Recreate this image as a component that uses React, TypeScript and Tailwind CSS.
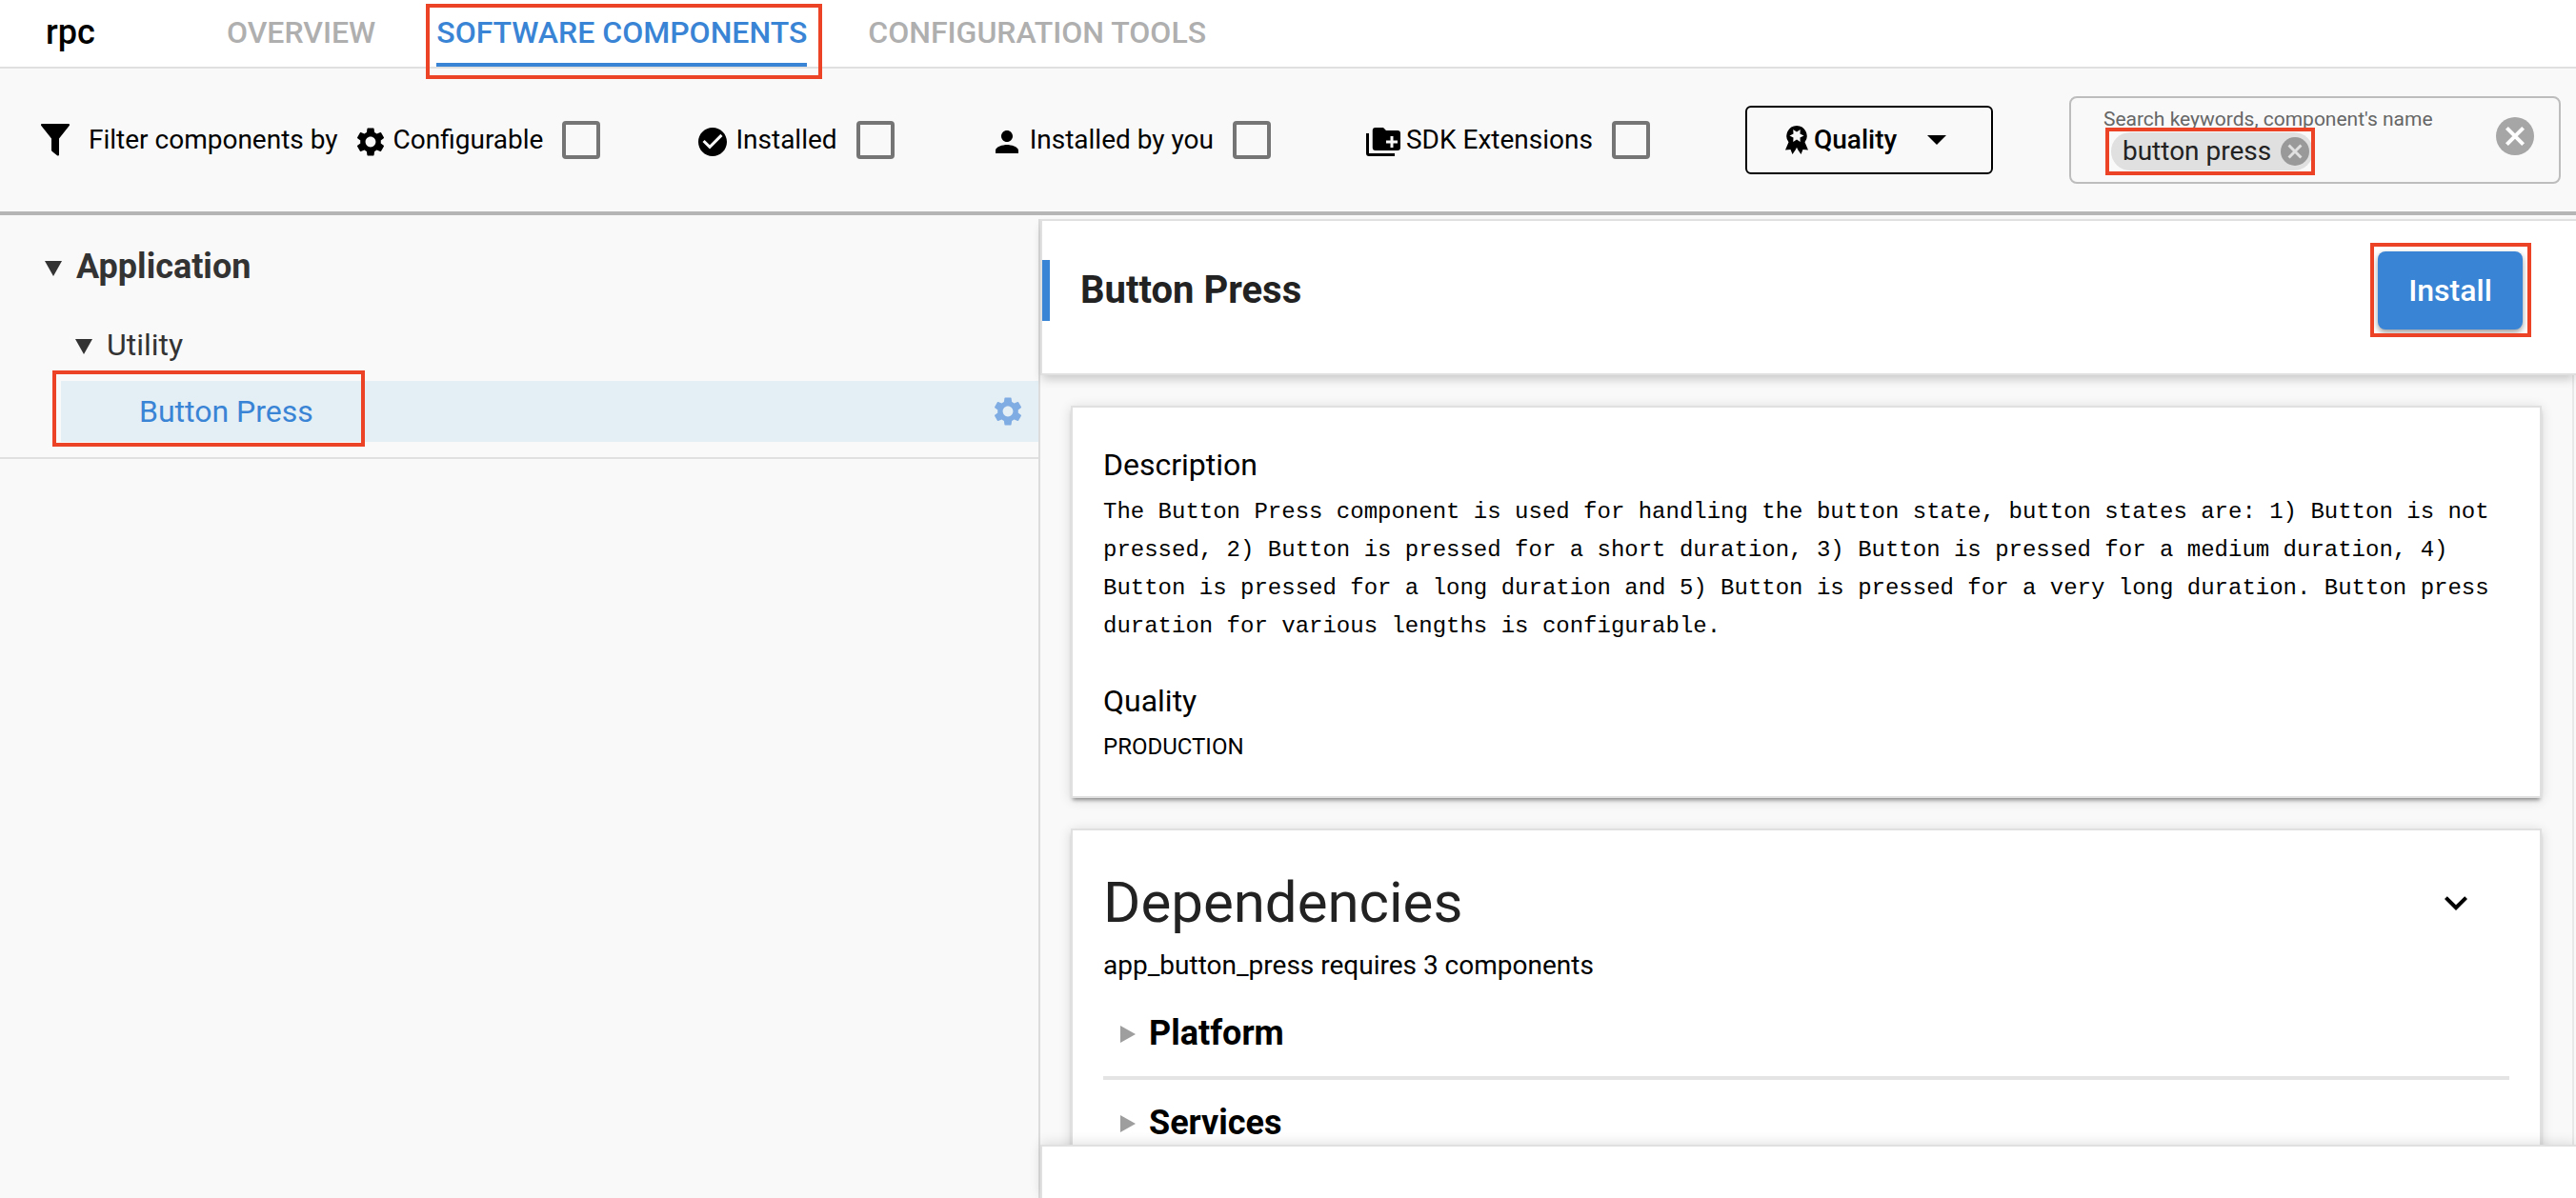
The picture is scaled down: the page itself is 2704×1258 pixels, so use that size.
import React from "react";
import { MdSettings, MdCheckCircle, MdPerson, MdKeyboardArrowDown } from "react-icons/md";

function Mark({ className }: { className: string }) {
  return <span aria-hidden="true" className={`pointer-events-none absolute border-4 border-[#ec4327] ${className}`} />;
}

function Funnel() {
  return (
    <svg viewBox="0 0 30 34" className="h-[34px] w-[30px] shrink-0" aria-hidden="true">
      <path d="M1 0h28c1 0 1.300 1 .7 2L19 15.500V32c0 1.500-1 2-2 1.300l-5-4c-.7-.6-1-1-1-2V15.500L.3 2C-.3 1 0 0 1 0z" />
    </svg>
  );
}

function FolderMultiplePlus() {
  return (
    <svg viewBox="0 0 24 24" className="size-9" aria-hidden="true">
      <path d="M22 4h-8l-2-2H6.500a2 2 0 0 0-2 2v12a2 2 0 0 0 2 2H22a2 2 0 0 0 2-2V6a2 2 0 0 0-2-2zM2 6H0v14a2 2 0 0 0 2 2h18v-2H2z" />
      <path d="M17 8h2v3h3v2h-3v3h-2v-3h-3v-2h3z" fill="#f9f9f9" />
    </svg>
  );
}

function Ribbon() {
  return (
    <svg viewBox="0 0 24 30" className="h-[30px] w-6 shrink-0" aria-hidden="true">
      <path d="M12 0a10.800 10.800 0 0 1 8.500 17.300L24 25.500l-5.500-.6L16.500 30 12 23.500 7.500 30l-2-5.100L0 25.500l3.500-8.200A10.800 10.800 0 0 1 12 0z" />
      <path
        d="M19.500 10.500l-4 2L15.750 17 12 14.500 8.250 17l.25-4.500-4-2 4-2L8.250 4 12 6.500 15.750 4l-.25 4.500z"
        fill="#f9f9f9"
      />
      <path d="M12 22.500l-1.200 5 1.200 2.500 1.200-2.500z" fill="#f9f9f9" />
    </svg>
  );
}

function Cross({ className, stroke }: { className: string; stroke: string }) {
  return (
    <svg viewBox="0 0 20 20" className={className} aria-hidden="true">
      <circle cx="10" cy="10" r="10" fill="currentColor" />
      <path d="M5.700 5.700l8.600 8.600M14.300 5.700l-8.600 8.600" stroke={stroke} strokeWidth="2" />
    </svg>
  );
}

function Triangle({ className, right }: { className: string; right?: boolean }) {
  return right ? (
    <svg viewBox="0 0 16 18" className={className} fill="currentColor" aria-hidden="true">
      <path d="M0 0l16 9-16 9z" />
    </svg>
  ) : (
    <svg viewBox="0 0 18 16" preserveAspectRatio="none" className={className} fill="currentColor" aria-hidden="true">
      <path d="M0 0h18L9 16z" />
    </svg>
  );
}

function Filter({ icon, label }: { icon: React.ReactNode; label: string }) {
  return (
    <label className="flex shrink-0 items-center">
      <span className="mt-1">{icon}</span>
      <span className="ml-1.5 whitespace-nowrap">{label}</span>
      <input type="checkbox" className="ml-5 size-10 appearance-none rounded border-4 border-[#757575]" />
    </label>
  );
}

const card = "border-2 border-[#e0e0e0] bg-white px-8 shadow-[0_4px_4px_-2px_rgba(0,0,0,0.4),0_2px_12px_rgba(0,0,0,0.14)]";

export default function App() {
  return (
    <div className="flex h-screen flex-col overflow-hidden bg-[#f9f9f9] font-[Roboto,sans-serif] text-[28px] leading-10 text-black">
      <header className="flex h-18 shrink-0 border-b-2 border-[#e0e0e0] bg-white pl-12">
        <h1 className="w-[190px] pt-3 text-[36px] leading-11 font-medium">rpc</h1>
        <nav className="flex gap-16 text-[32px] font-medium text-[#afafaf]">
          <a href="#overview" className="pt-3.5">OVERVIEW</a>
          <a href="#components" className="relative border-b-4 border-[#3a84d5] pt-3.5 text-[#3a84d5]">
            SOFTWARE COMPONENTS
            <Mark className="top-1 -right-4 -bottom-[17px] -left-[11px] z-10" />
          </a>
          <a href="#tools" className="pt-3.5">CONFIGURATION TOOLS</a>
        </nav>
      </header>

      <section className="flex h-[154px] shrink-0 items-center border-b-4 border-[#b5b5b5] pr-4 pl-[43px]">
        <Funnel />
        <span className="ml-5 shrink-0 whitespace-nowrap">Filter components by</span>
        <div className="ml-4 flex shrink-0 gap-[100px]">
          <Filter icon={<MdSettings className="size-9" />} label="Configurable" />
          <Filter icon={<MdCheckCircle className="size-9" />} label="Installed" />
          <Filter icon={<MdPerson className="size-9" />} label="Installed by you" />
          <Filter icon={<FolderMultiplePlus />} label="SDK Extensions" />
          <button className="flex h-18 w-[260px] items-center rounded-md border-2 border-black pl-10 font-medium">
            <Ribbon />
            <span className="ml-1.5">Quality</span>
            <Triangle className="ml-8 h-2.5 w-5 shrink-0" />
          </button>
        </div>
        <div className="ml-20 flex h-[92px] min-w-0 flex-1 items-center rounded-lg border-2 border-[#bdbdbd] pr-[26px] pl-[34px]">
          <div className="min-w-0 flex-1 pb-1">
            <label htmlFor="search" className="block text-[21px] leading-7 whitespace-nowrap text-[#666]">
              Search keywords, component's name
            </label>
            <div className="flex">
              <span className="relative ml-2 flex h-10 shrink-0 items-center gap-2.5 rounded-full bg-[#e0e0e0] pr-1 pl-3 whitespace-nowrap text-[#222]">
                button press
                <button aria-label="Remove button press" className="text-[#999]">
                  <Cross className="size-[30px]" stroke="#e0e0e0" />
                </button>
                <Mark className="-inset-y-[5px] -right-0.5 -left-1.5" />
              </span>
              <input id="search" className="w-0 min-w-0 flex-1 bg-transparent outline-none" />
            </div>
          </div>
          <button aria-label="Clear search" className="mb-2 text-[#a6a6a6]">
            <Cross className="size-10" stroke="#fff" />
          </button>
        </div>
      </section>

      <main className="grid min-h-0 flex-1 grid-cols-[1092fr_1612fr] pt-1">
        <aside className="border-r-2 border-[#dcdcdc] text-[32px] text-[#333]">
          <div className="border-b-2 border-[#e0e0e0] pt-7 pb-4">
            <button className="flex h-11 items-center pl-[47px] text-[36px] font-bold">
              <Triangle className="mt-1 mr-[15px] h-4 w-[18px]" />
              Application
            </button>
            <button className="mt-10 flex items-center pl-[79px]">
              <Triangle className="mt-1 mr-[15px] h-4 w-[18px]" />
              Utility
            </button>
            <div className="relative mt-[18px] ml-16 flex h-16 items-center justify-between bg-[#e4eef5] pr-3.5 pl-[82px] text-[#3a84d5]">
              <a href="#button-press">Button Press</a>
              <MdSettings className="size-9 text-[#7face2]" />
              <Mark className="-top-[11px] -bottom-[5px] -left-[9px] w-[328px]" />
            </div>
          </div>
        </aside>

        <section className="flex min-h-0 flex-col">
          <div className="z-10 flex h-[164px] shrink-0 items-start justify-between border-2 border-r-0 border-[#e0e0e0] bg-white pr-14 shadow-[0_6px_10px_-2px_rgba(0,0,0,0.2)]">
            <h2 className="mt-[41px] flex h-16 items-center border-l-8 border-[#3a84d5] pl-8 text-[40px] font-bold text-[#222]">
              Button Press
            </h2>
            <div className="relative mt-8">
              <button className="h-[82px] w-[152px] rounded-lg bg-[#3a84d5] text-[32px] font-medium text-white shadow-[0_3px_6px_rgba(0,0,0,0.4)]">
                Install
              </button>
              <Mark className="-top-[9px] -right-[9px] -bottom-2 -left-2" />
            </div>
          </div>

          <div className="mr-0.5 flex min-h-0 flex-1 flex-col gap-8 overflow-hidden border-r-2 border-[#e8e8e8] p-8">
            <article className={`${card} shrink-0 pt-10 pb-8`}>
              <h3 className="text-[32px]">Description</h3>
              <p className="mt-2.5 font-['Liberation_Mono',monospace] text-[24px]">
                The Button Press component is used for handling the button state, button states are: 1) Button is not
                pressed, 2) Button is pressed for a short duration, 3) Button is pressed for a medium duration, 4) Button
                is pressed for a long duration and 5) Button is pressed for a very long duration. Button press duration
                for various lengths is configurable.
              </p>
              <h3 className="mt-[38px] text-[32px]">Quality</h3>
              <p className="mt-2 text-[24px]">PRODUCTION</p>
            </article>

            <article className={`${card} shrink-0 pt-10`}>
              <div className="flex items-center justify-between pr-8">
                <h3 className="text-[60px] leading-[72px] text-[#222]">Dependencies</h3>
                <button aria-label="Collapse dependencies">
                  <MdKeyboardArrowDown className="size-12" />
                </button>
              </div>
              <p className="mt-2.5 mb-1.5">app_button_press requires 3 components</p>
              <div className="text-[36px] font-bold">
                {["Platform", "Services"].map((name) => (
                  <button key={name} className="flex h-[94px] w-full items-center border-b-4 border-[#e4e4e4] pl-[18px]">
                    <Triangle right className="mt-0.5 mr-3.5 h-[18px] w-4 text-[#9e9e9e]" />
                    {name}
                  </button>
                ))}
              </div>
            </article>
          </div>

          <footer className="z-10 h-14 shrink-0 border-t-2 border-l-2 border-[#e0e0e0] bg-white shadow-[0_-2px_12px_rgba(0,0,0,0.12)]" />
        </section>
      </main>
    </div>
  );
}
